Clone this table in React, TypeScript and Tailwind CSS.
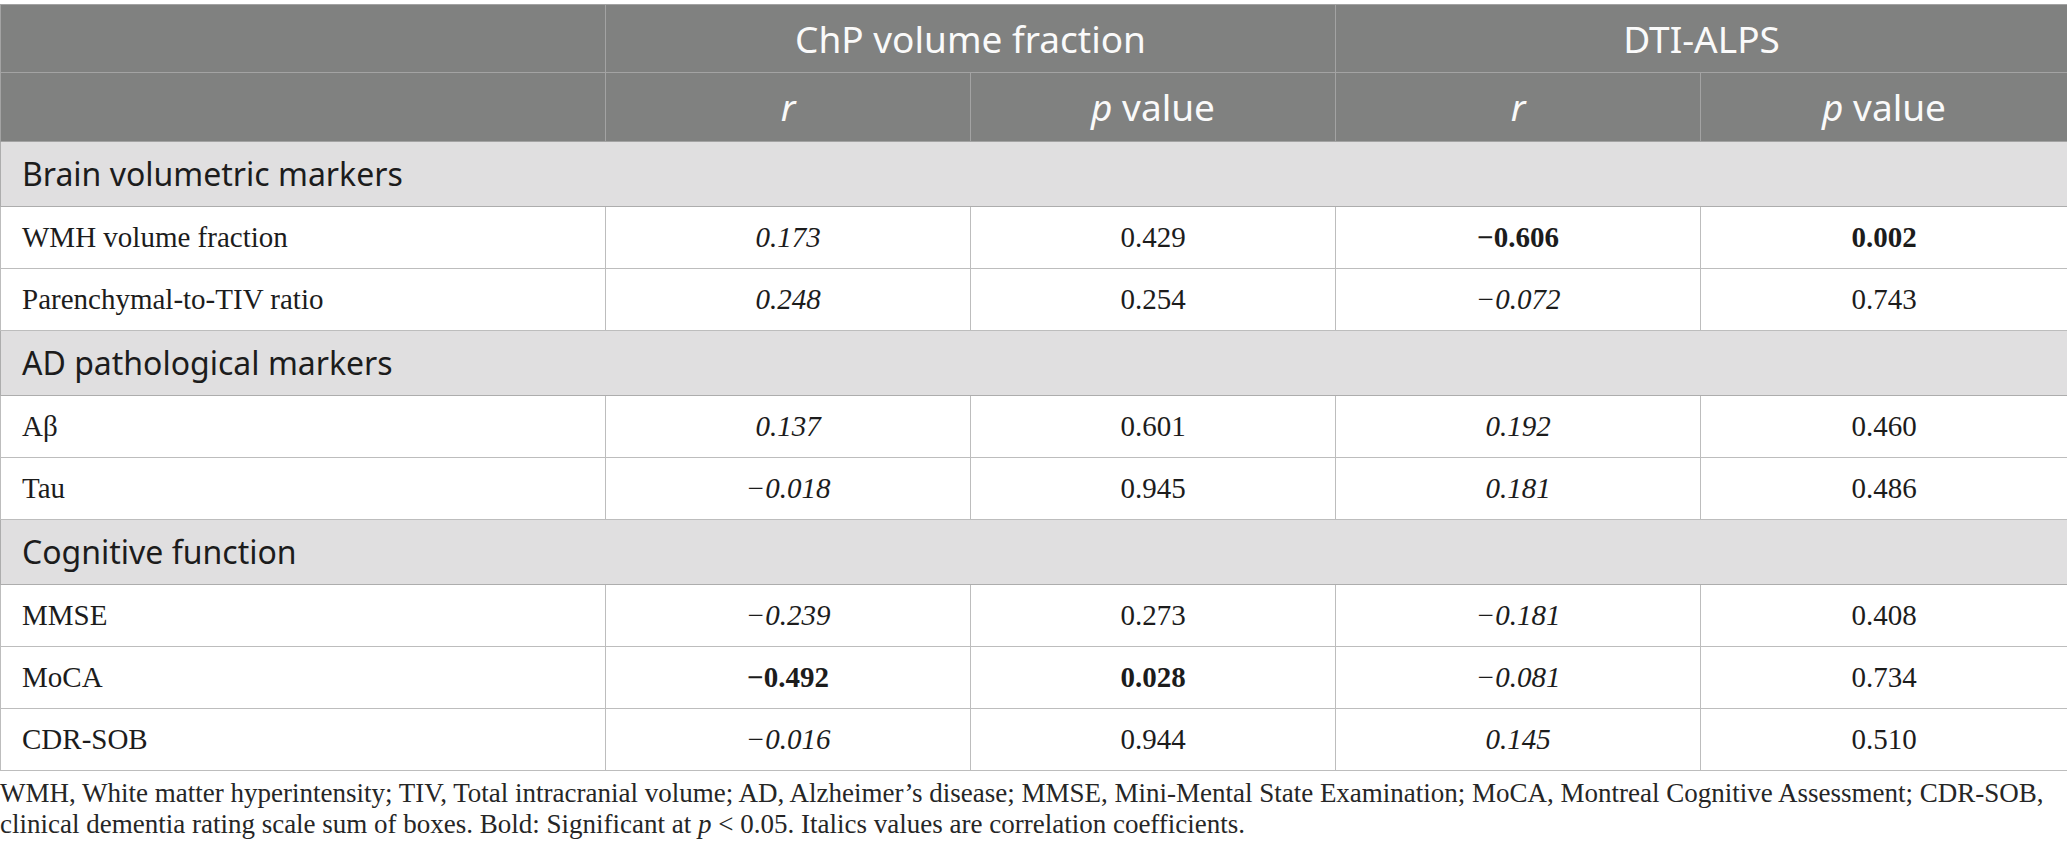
import React from 'react';

type Cell = { v: string; it?: boolean; b?: boolean };
type Row = { label: string; cells: Cell[] };
type Section = { title: string; rows: Row[] };

const sections: Section[] = [
  {
    title: 'Brain volumetric markers',
    rows: [
      { label: 'WMH volume fraction', cells: [{ v: '0.173', it: true }, { v: '0.429' }, { v: '−0.606', b: true }, { v: '0.002', b: true }] },
      { label: 'Parenchymal-to-TIV ratio', cells: [{ v: '0.248', it: true }, { v: '0.254' }, { v: '−0.072', it: true }, { v: '0.743' }] },
    ],
  },
  {
    title: 'AD pathological markers',
    rows: [
      { label: 'Aβ', cells: [{ v: '0.137', it: true }, { v: '0.601' }, { v: '0.192', it: true }, { v: '0.460' }] },
      { label: 'Tau', cells: [{ v: '−0.018', it: true }, { v: '0.945' }, { v: '0.181', it: true }, { v: '0.486' }] },
    ],
  },
  {
    title: 'Cognitive function',
    rows: [
      { label: 'MMSE', cells: [{ v: '−0.239', it: true }, { v: '0.273' }, { v: '−0.181', it: true }, { v: '0.408' }] },
      { label: 'MoCA', cells: [{ v: '−0.492', b: true }, { v: '0.028', b: true }, { v: '−0.081', it: true }, { v: '0.734' }] },
      { label: 'CDR-SOB', cells: [{ v: '−0.016', it: true }, { v: '0.944' }, { v: '0.145', it: true }, { v: '0.510' }] },
    ],
  },
];

const sans = "font-['Noto_Sans',sans-serif]";
const serif = "font-['Liberation_Serif',serif]";

export default function App() {
  return (
    <div className="w-[2067px] bg-white pt-[4px]">
      <table className="w-full table-fixed border-collapse">
        <colgroup>
          <col className="w-[605px]" />
          <col className="w-[365px]" />
          <col className="w-[365px]" />
          <col className="w-[365px]" />
          <col className="w-[367px]" />
        </colgroup>
        <thead className={`${sans} bg-[#808180] text-[37px] font-normal text-[#fafafa]`}>
          <tr className="h-[68px]">
            <th className="border border-[#a3a3a3]" />
            <th colSpan={2} className="border border-[#a3a3a3] font-normal">
              ChP volume fraction
            </th>
            <th colSpan={2} className="border border-[#a3a3a3] font-normal">
              DTI-ALPS
            </th>
          </tr>
          <tr className="h-[69px]">
            <th className="border border-[#a3a3a3]" />
            <th className="border border-[#a3a3a3] font-normal italic">r</th>
            <th className="border border-[#a3a3a3] font-normal">
              <span className="italic">p</span> value
            </th>
            <th className="border border-[#a3a3a3] font-normal italic">r</th>
            <th className="border border-[#a3a3a3] font-normal">
              <span className="italic">p</span> value
            </th>
          </tr>
        </thead>
        <tbody>
          {sections.map((s) => (
            <React.Fragment key={s.title}>
              <tr className="h-[65px] bg-[#e0dfe0]">
                <td colSpan={5} className={`${sans} border border-[#adadad] pl-[21px] text-[32px] text-[#1c1c1c]`}>
                  {s.title}
                </td>
              </tr>
              {s.rows.map((r) => (
                <tr key={r.label} className={`h-[62px] ${serif} text-[29px] text-[#1c1c1c]`}>
                  <td className="border border-[#bdbdbd] pl-[21px]">{r.label}</td>
                  {r.cells.map((c, i) => (
                    <td
                      key={i}
                      className={`border border-[#bdbdbd] text-center ${c.it ? 'italic' : ''} ${c.b ? 'font-bold' : ''}`}
                    >
                      {c.v}
                    </td>
                  ))}
                </tr>
              ))}
            </React.Fragment>
          ))}
        </tbody>
      </table>
      <p className={`${serif} mt-[7px] text-[27px] leading-[31px] text-[#262626]`}>
        WMH, White matter hyperintensity; TIV, Total intracranial volume; AD, Alzheimer’s disease; MMSE, Mini-Mental
        State Examination; MoCA, Montreal Cognitive Assessment; CDR-SOB, clinical dementia rating scale sum of boxes.
        Bold: Significant at <i>p</i> &lt; 0.05. Italics values are correlation coefficients.
      </p>
    </div>
  );
}
